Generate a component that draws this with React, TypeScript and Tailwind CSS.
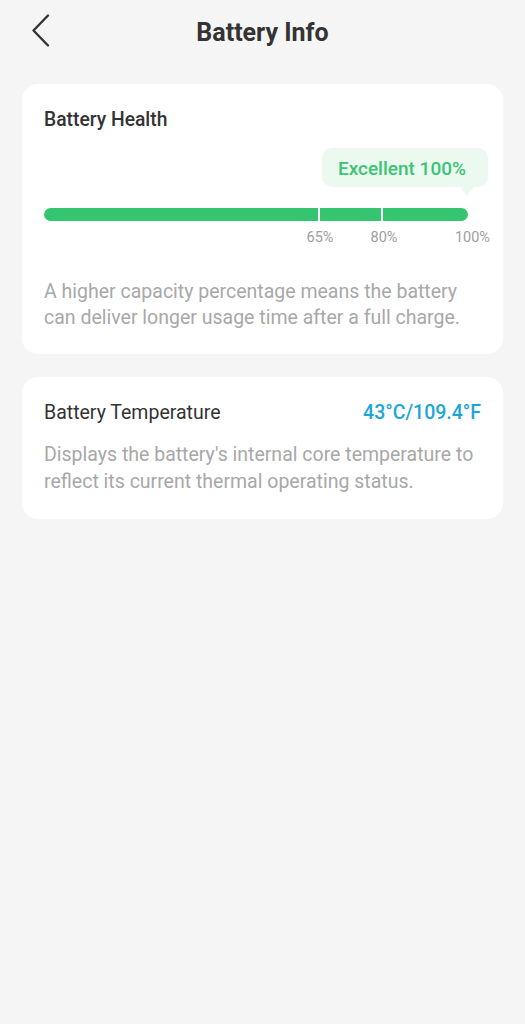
import React from "react";

export default function App() {
  return (
    <div
      className="min-h-[1024px] w-full bg-[#f5f5f5]"
      style={{ fontFamily: "Roboto, 'Noto Sans', sans-serif" }}
    >
      {/* Header */}
      <div className="relative flex h-[64px] items-center justify-center">
        <svg
          className="absolute left-[30px] top-[13px]"
          width="22"
          height="36"
          viewBox="0 0 22 36"
          fill="none"
        >
          <path
            d="M18 2.5 L3.5 17.5 L18 32.5"
            stroke="#333333"
            strokeWidth="2.4"
            strokeLinecap="round"
            strokeLinejoin="round"
          />
        </svg>
        <h1 className="text-[25px] font-bold leading-none text-[#333333]">
          Battery Info
        </h1>
      </div>

      <div className="mt-[20px] flex flex-col gap-[23px] px-[22px]">
        {/* Battery Health card */}
        <div className="rounded-[16px] bg-white pl-[22px] pr-[15px] pt-[24px] pb-[23px]">
          <div className="text-[19.3px] font-medium leading-[24px] text-[#333333]">
            Battery Health
          </div>

          <div className="mt-[16px] flex justify-end">
            <div className="relative flex h-[39px] items-center rounded-[10px] bg-[#ebf9f0] pl-[16px] pr-[22px] pt-[3px]">
              <span className="text-[19px] font-medium text-[#3cc472]">
                Excellent 100%
              </span>
              <div className="absolute bottom-[-9px] right-[14px] h-0 w-0 border-l-[7px] border-r-[7px] border-t-[9px] border-l-transparent border-r-transparent border-t-[#ebf9f0]" />
            </div>
          </div>

          {/* Bar */}
          <div className="mt-[21px] mr-[20px] flex h-[13px] overflow-hidden rounded-full bg-[#35c571]">
            <div className="w-[65%] border-r-[2px] border-white" />
            <div className="w-[15%] border-r-[2px] border-white" />
            <div className="flex-1" />
          </div>

          {/* Labels */}
          <div className="relative mt-[8px] h-[18px] text-[14.5px] leading-[18px] text-[#9e9e9e]">
            <span className="absolute left-[276px] -translate-x-1/2">65%</span>
            <span className="absolute left-[340px] -translate-x-1/2">80%</span>
            <span className="absolute right-[-2px]">100%</span>
          </div>

          <p className="mt-[32px] pr-[10px] text-[19.5px] leading-[26px] text-[#a8a8a8]">
            A higher capacity percentage means the battery can deliver longer
            usage time after a full charge.
          </p>
        </div>

        {/* Battery Temperature card */}
        <div className="rounded-[16px] bg-white px-[22px] pt-[23px] pb-[24px]">
          <div className="flex items-center justify-between">
            <span className="text-[19.5px] leading-[26px] text-[#333333]">
              Battery Temperature
            </span>
            <span className="text-[19.5px] font-medium leading-[26px] text-[#1ca5d8]">
              43°C/109.4°F
            </span>
          </div>
          <p className="mt-[15px] text-[19.5px] leading-[27px] text-[#a8a8a8]">
            Displays the battery's internal core temperature to reflect its
            current thermal operating status.
          </p>
        </div>
      </div>
    </div>
  );
}
